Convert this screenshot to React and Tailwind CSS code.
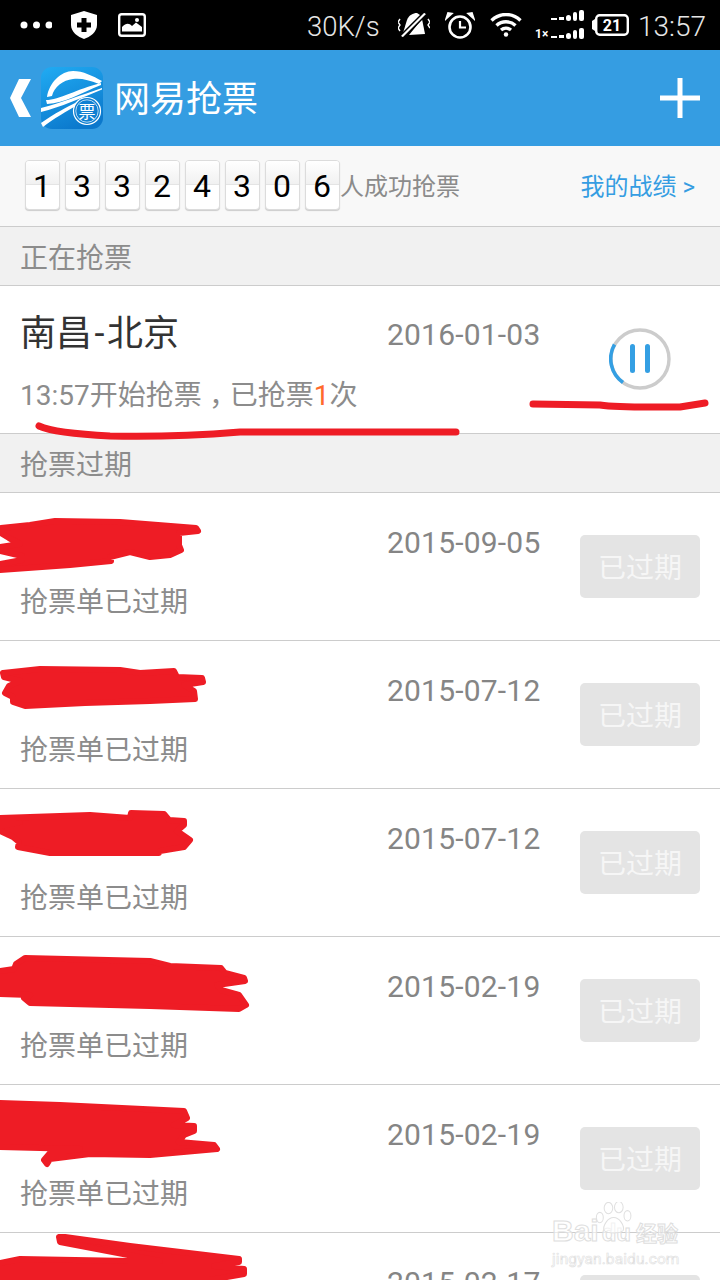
const digits = ['1', '3', '3', '2', '4', '3', '0', '6'];
const expired = ['2015-09-05', '2015-07-12', '2015-07-12', '2015-02-19', '2015-02-19', '2015-02-17'];

const blobs = [
  'M1 528 L30 525 L55 521 L120 522 L196 528 L198 531 L179 533 L179 545 L181 550 L170 555 L150 557 L130 552 L110 557 L111 561 L70 565 L0 570 L0 564 L22 560 L22 556 L0 551 L0 547 L20 544 L9 538 L1 533 Z',
  'M3 673 L40 669 L120 670 L140 673 L174 671 L177 677 L202 678 L203 682 L184 685 L194 691 L195 699 L150 701 L85 703 L25 706 L13 702 L13 697 L5 693 L9 686 L20 681 L4 677 Z',
  'M0 818 L90 815 L130 818 L131 813 L164 814 L169 820 L184 821 L184 825 L177 831 L190 840 L184 847 L160 851 L159 853 L50 853 L18 847 L19 842 L13 837 L0 831 L0 826 L20 822 L0 822 Z',
  'M16 964 L25 958 L150 961 L170 966 L221 968 L225 973 L244 978 L245 981 L217 985 L221 990 L239 995 L246 1005 L239 1009 L150 1006 L30 1003 L24 998 L30 995 L0 994 L0 971 L14 969 Z',
  'M0 1103 L60 1105 L184 1111 L187 1118 L174 1125 L194 1126 L194 1131 L184 1135 L179 1142 L214 1145 L217 1149 L150 1155 L90 1154 L50 1159 L47 1164 L44 1160 L50 1153 L80 1149 L0 1147 Z',
  'M59 1237 L65 1237 L130 1246 L239 1259 L239 1262 L214 1266 L244 1269 L244 1274 L210 1280 L0 1280 L0 1263 L20 1259 L130 1261 L160 1261 L60 1242 Z',
];

function StatusBar() {
  return (
    <div className="flex h-[50px] items-center bg-black text-[#e6e6e6]">
      <svg className="ml-[20px] shrink-0" width="32" height="8" viewBox="0 0 32 8" fill="#fff">
        <circle cx="4" cy="4" r="3.5" />
        <circle cx="16.5" cy="4" r="3.5" />
        <circle cx="29" cy="4" r="3.5" />
      </svg>
      <svg className="ml-[19px] shrink-0" width="26" height="28" viewBox="0 0 26 28">
        <path d="M13 0 L26 4 V14 C26 21 19 26 13 28 C7 26 0 21 0 14 V4 Z" fill="#fff" />
        <path d="M10.5 7 H15.5 V11.5 H20 V16.5 H15.5 V21 H10.5 V16.5 H6 V11.5 H10.5 Z" fill="#000" />
      </svg>
      <svg className="ml-[21px] shrink-0" width="28" height="24" viewBox="0 0 28 24">
        <rect x="1.2" y="1.2" width="25.6" height="21.6" rx="2.5" fill="none" stroke="#fff" strokeWidth="2.4" />
        <path d="M4 18.5 V14 C8 10 11 10 14 13 L18 9.5 L24 14 V18.5 Z" fill="#fff" />
        <circle cx="19" cy="7" r="2" fill="#fff" />
      </svg>
      <span className="ml-[161px] w-[91px] shrink-0 pt-[4px] text-[27.5px] font-light leading-none">30K/s</span>
      <svg className="shrink-0" width="32" height="26" viewBox="0 0 32 26" fill="#fff">
        <path d="M9 8 C11 3 15 1 19 1 L25 5 L8 22 L5 21 Z" />
        <path d="M24 7 L27 22 L11 23 Z" />
        <path d="M26 0 L29 2 L5 26 L2 24 Z" fill="#fff" stroke="#000" strokeWidth="1.4" />
        <path d="M2 7 L0 10 L2 13 L0 16 L2 19 M30 7 L32 10 L30 13 L32 16" fill="none" stroke="#fff" strokeWidth="1.4" />
      </svg>
      <svg className="ml-[15px] shrink-0" width="30" height="27" viewBox="0 0 30 27" fill="none" stroke="#fff">
        <circle cx="15" cy="15" r="10.5" strokeWidth="2.6" />
        <path d="M15 9 V15.5 H21" strokeWidth="2.2" />
        <path d="M1 7 L7 1.5 L3 1 Z M29 7 L23 1.5 L27 1 Z" fill="#fff" strokeWidth="1.6" />
      </svg>
      <svg className="ml-[15px] shrink-0" width="32" height="24" viewBox="0 0 32 24" fill="none" stroke="#fff" strokeWidth="3.4">
        <path d="M1.5 7.5 C10 -0.5 22 -0.5 30.5 7.5" />
        <path d="M6.5 12.5 C12 7.5 20 7.5 25.5 12.5" />
        <path d="M11 17 C14 14.5 18 14.5 21 17" />
        <circle cx="16" cy="21.5" r="2.2" fill="#fff" stroke="none" />
      </svg>
      <svg className="ml-[13px] shrink-0" width="49" height="30" viewBox="0 0 49 30" fill="#fff">
        <rect x="16" y="8" width="6" height="2" />
        <rect x="24" y="7" width="5" height="3" />
        <rect x="31" y="5" width="5" height="6" rx="2.5" />
        <rect x="38" y="2" width="4" height="9" rx="2" />
        <rect x="44" y="0" width="5" height="11" rx="2" />
        <rect x="16" y="26" width="6" height="2" />
        <rect x="24" y="25" width="5" height="3" />
        <rect x="31" y="23" width="5" height="6" rx="2.5" />
        <rect x="38" y="20" width="4" height="9" rx="2" />
        <rect x="44" y="18" width="5" height="11" rx="2" />
        <text x="0" y="28" fontSize="12" fontWeight="700" fontFamily="Roboto, sans-serif">1×</text>
      </svg>
      <svg className="ml-[8px] shrink-0" width="37" height="22" viewBox="0 0 37 22">
        <rect x="4.2" y="1.2" width="31.6" height="19.6" rx="3.5" fill="none" stroke="#fff" strokeWidth="2.4" />
        <path d="M0 7 L3 5 V17 L0 15 Z" fill="#fff" />
        <text x="20" y="17" textAnchor="middle" fontSize="16" fontWeight="700" fill="#fff" fontFamily="Roboto, sans-serif">21</text>
      </svg>
      <span className="ml-[9px] pt-[4px] text-[28px] font-light leading-none">13:57</span>
    </div>
  );
}

function Header() {
  return (
    <div className="flex h-[96px] items-center bg-[#359de2] pl-[10px] pr-[20px] text-white">
      <svg className="shrink-0" width="21" height="38" viewBox="0 0 21 38" fill="#fff">
        <path d="M9 0 H21 L11 19 L21 38 H9 L0 19 Z" />
      </svg>
      <svg className="ml-[10px] shrink-0" width="62" height="62" viewBox="0 0 62 62">
        <defs>
          <linearGradient id="appIcon" x1="0.2" y1="0" x2="0.6" y2="1">
            <stop offset="0" stopColor="#1fa8f0" />
            <stop offset="1" stopColor="#0b78cc" />
          </linearGradient>
        </defs>
        <rect width="62" height="62" rx="11" fill="url(#appIcon)" />
        <path d="M6 30 C8 16 20 4 32 4 C42 4 52 9 61 14 L58 17 C48 13 40 11 32 12 C22 13 13 20 11 29 Z" fill="#fff" />
        <path d="M5 33 C18 33 36 22 60 16 L60 18 C40 26 24 36 6 37 Z" fill="#fff" />
        <path d="M0 41 C20 36 40 28 61 21 L61 22.5 C40 31 20 40 0 45 Z" fill="#fff" />
        <path d="M0 56 C14 46 26 40 36 35 L38 37 C26 44 12 52 2 60 Z" fill="#fff" />
        <circle cx="46" cy="44" r="13.5" fill="#0f80d2" stroke="#fff" strokeWidth="1.2" />
        <circle cx="46" cy="44" r="11.2" fill="none" stroke="#fff" strokeWidth="0.7" />
        <text x="46" y="50.5" textAnchor="middle" fontSize="17" fill="#fff" fontFamily="'Noto Sans CJK SC', sans-serif">票</text>
      </svg>
      <span className="ml-[11px] pt-[4px] text-[36px] leading-none">网易抢票</span>
      <svg className="ml-auto shrink-0" width="40" height="40" viewBox="0 0 40 40" fill="#fff">
        <rect x="17.5" y="0" width="5" height="40" />
        <rect x="0" y="17.5" width="40" height="5" />
      </svg>
    </div>
  );
}

function Digit({ value }) {
  return (
    <div className="relative flex h-[50px] w-[35px] items-center justify-center overflow-hidden rounded-[4px] border border-[#dcdcdc] bg-white shadow-[0_1px_1px_rgba(0,0,0,0.18)]">
      <div className="absolute inset-x-0 top-0 h-[24px] border-b border-[#e4e4e4] bg-gradient-to-b from-white to-[#f1f1f1]" />
      <span className="relative pr-[1px] pt-[1px] text-[32px] leading-none text-black">{value}</span>
    </div>
  );
}

function CounterBar() {
  return (
    <div className="flex h-[81px] items-center border-b border-[#cccccc] bg-[#f8f8f8] pb-[2px] pl-[25px] pr-[25px]">
      <div className="flex gap-[5px]">
        {digits.map((d, i) => (
          <Digit key={i} value={d} />
        ))}
      </div>
      <span className="pt-[4px] text-[24px] leading-none text-[#8b8b8b]">人成功抢票</span>
      <span className="ml-auto pt-[4px] text-[24px] leading-none text-[#359de2]">我的战绩 &gt;</span>
    </div>
  );
}

function SectionTitle({ children }) {
  return (
    <div className="flex h-[59px] items-center border-b border-[#cccccc] bg-[#f1f1f1] pl-[20px] pt-[5px] text-[28px] leading-none text-[#8c8c8c]">
      {children}
    </div>
  );
}

function ActiveRow() {
  return (
    <div className="flex h-[148px] border-b border-[#cccccc] bg-white">
      <div className="w-[387px] shrink-0 pl-[20px]">
        <div className="mt-[30px] text-[36px] leading-[36px] text-[#333333]">
          南昌<span className="px-[2.5px]">-</span>北京
        </div>
        <div className="mt-[27px] text-[28px] leading-[28px] text-[#8c8c8c]">
          13:57开始抢票<span className="relative top-[9px] font-['Noto_Sans_CJK_TC',sans-serif]">，</span>已抢票<span className="text-[#ff6a2b]">1</span>次
        </div>
      </div>
      <div className="mt-[34px] w-[193px] shrink-0 text-[30px] leading-[30px] tracking-[0.2px] text-[#858585]">2016-01-03</div>
      <div className="mt-[42px] flex w-[120px] justify-center">
        <svg width="62" height="62" viewBox="0 0 62 62" fill="none">
          <circle cx="31" cy="31" r="29" stroke="#cccccc" strokeWidth="3.4" />
          <path d="M5.5 16.5 A29 29 0 0 0 14 54.5" stroke="#349fe3" strokeWidth="3.6" />
          <rect x="21" y="16" width="5" height="29" rx="2.5" fill="#349fe3" />
          <rect x="36" y="16" width="5" height="29" rx="2.5" fill="#349fe3" />
        </svg>
      </div>
    </div>
  );
}

function ExpiredRow({ date }) {
  return (
    <div className="flex h-[148px] border-b border-[#cccccc] bg-white">
      {/* the route name is scribbled out in the picture, so only the status line is left */}
      <div className="w-[387px] shrink-0 pl-[20px]">
        <div className="mt-[96px] text-[28px] leading-[28px] text-[#8c8c8c]">抢票单已过期</div>
      </div>
      <div className="mt-[35px] w-[193px] shrink-0 text-[30px] leading-[30px] tracking-[0.2px] text-[#858585]">{date}</div>
      <div className="mt-[42px] flex h-[63px] w-[120px] items-center justify-center rounded-[5px] bg-[#e4e4e4] pt-[4px] text-[28px] leading-none text-[#f6f6f6]">
        已过期
      </div>
    </div>
  );
}

function Scribbles() {
  return (
    <svg className="pointer-events-none absolute inset-0" width="720" height="1280" viewBox="0 0 720 1280" fill="none" strokeLinecap="round" strokeLinejoin="round">
      <path d="M39 426 C50 431 70 434 110 436 C150 437 190 436 240 432 L456 432" stroke="#ee1c25" strokeWidth="7" />
      <path d="M533 404 L600 405 C620 408 650 407 680 407 L705 403" stroke="#ee1c25" strokeWidth="7" />
      {blobs.map((d, i) => (
        <path key={i} d={d} fill="#ee1c25" stroke="#ee1c25" strokeWidth="6" />
      ))}
    </svg>
  );
}

function Watermark() {
  return (
    <div className="pointer-events-none absolute left-[552px] top-[1202px] w-[130px]">
      <svg className="absolute left-[43px] top-0" width="39" height="38" viewBox="0 0 44 44" fill="rgba(255,255,255,0.6)" stroke="#e0e0e0" strokeWidth="1.2">
        <ellipse cx="5" cy="18" rx="4" ry="6" />
        <ellipse cx="15" cy="7" rx="5" ry="6.5" />
        <ellipse cx="27" cy="6" rx="5" ry="6.5" />
        <ellipse cx="37" cy="16" rx="4" ry="6" />
        <path d="M21 18 C28 18 34 28 32 33 C28 37 14 37 10 33 C8 28 14 18 21 18 Z" />
      </svg>
      <div className="mt-[14px] flex items-baseline font-['Liberation_Sans','Noto_Sans_CJK_SC',sans-serif] text-[30px] font-bold leading-none text-white/60 [-webkit-text-stroke:1px_#dedede]">
        <span>Bai</span>
        <span className="ml-[3px] text-[24px]">du</span>
        <span className="ml-[5px] text-[21px]">经验</span>
      </div>
      <div className="mt-[6px] text-[15.5px] leading-none tracking-[0.1px] text-white/60 [-webkit-text-stroke:0.6px_#e0e0e0]">jingyan.baidu.com</div>
    </div>
  );
}

export default function App() {
  return (
    <div className="relative h-[1280px] w-[720px] overflow-hidden bg-white font-['Roboto','Noto_Sans_CJK_SC',sans-serif]">
      <StatusBar />
      <Header />
      <CounterBar />
      <SectionTitle>正在抢票</SectionTitle>
      <ActiveRow />
      <SectionTitle>抢票过期</SectionTitle>
      {expired.map((date, i) => (
        <ExpiredRow key={i} date={date} />
      ))}
      <Scribbles />
      <Watermark />
    </div>
  );
}
